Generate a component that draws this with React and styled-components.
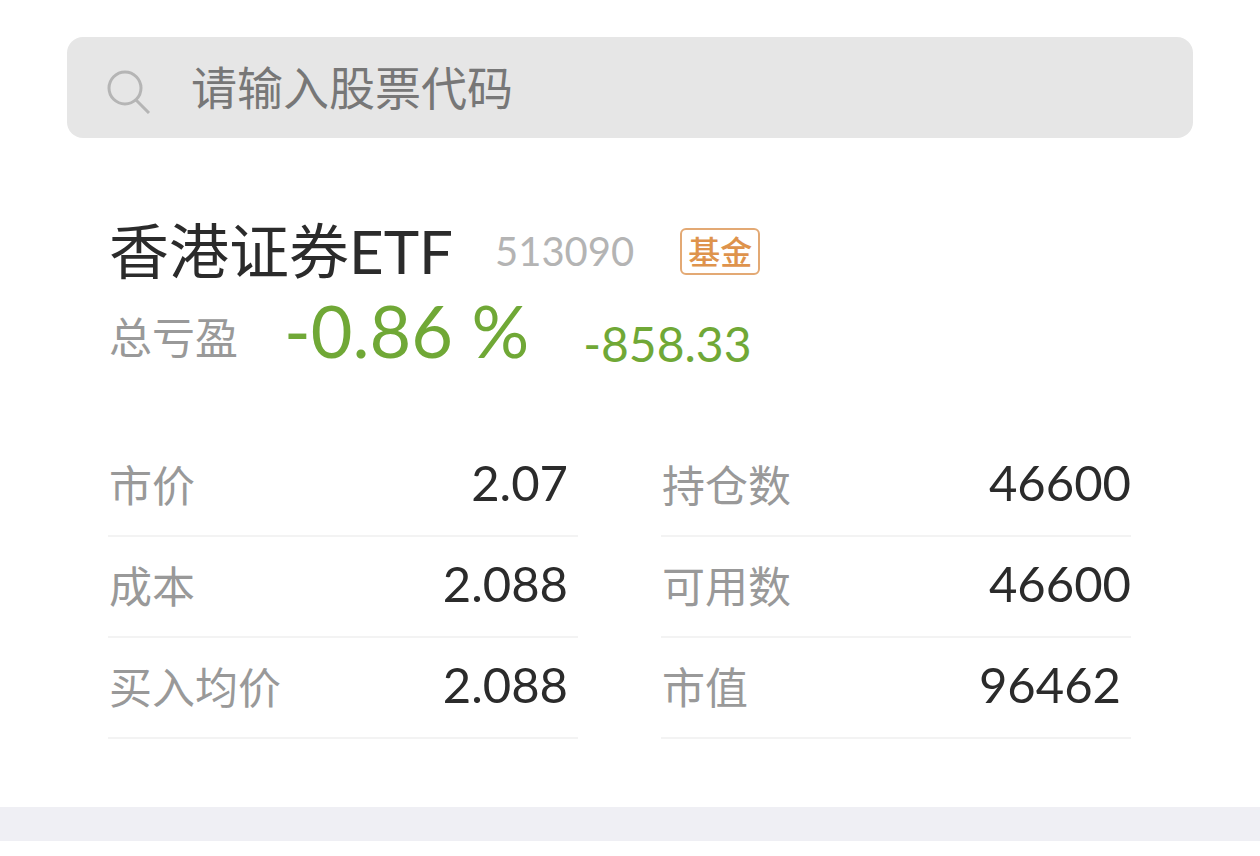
import { useState } from "react";
import styled, { createGlobalStyle } from "styled-components";

const GlobalStyle = createGlobalStyle`
  * {
    box-sizing: border-box;
  }
  body {
    margin: 0;
    background: #fff;
    color: #2b2b2b;
    font-family: Lato, "Noto Sans CJK SC", sans-serif;
  }
`;

const Page = styled.main`
  padding-top: 37px;
`;

const SearchBar = styled.label`
  display: flex;
  align-items: center;
  gap: 40px;
  height: 101px;
  margin: 0 67px;
  padding: 0 40px;
  border-radius: 16px;
  background: #e6e6e6;
`;

const SearchIcon = styled.svg`
  flex: none;
  width: 44px;
  height: 44px;
  margin-top: 8px;
  fill: none;
  stroke: #b5b5b5;
  stroke-width: 3;
`;

const SearchInput = styled.input`
  flex: 1;
  min-width: 0;
  padding: 0;
  border: 0;
  outline: 0;
  background: transparent;
  color: #2b2b2b;
  font-family: inherit;
  font-size: 46px;
  line-height: 64px;

  &::placeholder {
    color: #777;
    opacity: 1;
  }
`;

const Holding = styled.section`
  padding: 76px 129px 68px 108px;
`;

const TitleRow = styled.header`
  display: flex;
  align-items: center;
  height: 74px;
  padding-left: 1px;
`;

const Name = styled.h1`
  margin: 0;
  font-size: 60px;
  font-weight: 400;
  line-height: 72px;
`;

const Code = styled.span`
  margin-left: 42px;
  color: #b4b4b4;
  font-size: 40px;
  line-height: 48px;
`;

const Tag = styled.span`
  margin-left: 46px;
  padding: 0 6px;
  border: 2px solid #e3a974;
  border-radius: 6px;
  color: #de934c;
  font-size: 32px;
  font-weight: 500;
  line-height: 43px;
`;

const ProfitRow = styled.div`
  display: flex;
  align-items: flex-end;
  height: 84px;
  padding-left: 1px;
`;

const Label = styled.span`
  color: #999;
  font-size: 43px;
  line-height: 68px;
`;

const Profit = styled.strong`
  margin-left: ${(props) => (props.$large ? "46px" : "54px")};
  color: #70a836;
  font-size: ${(props) => (props.$large ? "72px" : "48px")};
  font-weight: 400;
  line-height: ${(props) => (props.$large ? "84px" : "56px")};
`;

const Stats = styled.dl`
  display: grid;
  grid-template-columns: 1fr 1fr;
  column-gap: 83px;
  margin: 64px 0 0;
`;

const Stat = styled.div`
  display: flex;
  align-items: center;
  justify-content: space-between;
  height: 101px;
  padding: 0 ${(props) => props.$inset || "0"} 0 1px;
  border-bottom: 2px solid #f3f3f3;
`;

const StatName = styled(Label).attrs({ as: "dt" })``;

const StatValue = styled.dd`
  margin: 0;
  padding-bottom: 8px;
  font-size: 49px;
  line-height: 60px;
`;

const Divider = styled.div`
  height: 34px;
  background: #efeff4;
`;

const stats = [
  { name: "市价", value: "2.07", inset: "10px" },
  { name: "持仓数", value: "46600" },
  { name: "成本", value: "2.088", inset: "10px" },
  { name: "可用数", value: "46600" },
  { name: "买入均价", value: "2.088", inset: "10px" },
  { name: "市值", value: "96462", inset: "10px" },
];

function Search() {
  const [keyword, setKeyword] = useState("");

  return (
    <SearchBar>
      <SearchIcon viewBox="0 0 44 44" aria-hidden="true">
        <circle cx="18" cy="18" r="16" />
        <path d="M29 30L42 43" />
      </SearchIcon>
      <SearchInput
        type="text"
        aria-label="请输入股票代码"
        placeholder="请输入股票代码"
        value={keyword}
        onChange={(e) => setKeyword(e.target.value)}
      />
    </SearchBar>
  );
}

function App() {
  return (
    <>
      <GlobalStyle />
      <Page>
        <Search />
        <Holding>
          <TitleRow>
            <Name>香港证券ETF</Name>
            <Code>513090</Code>
            <Tag>基金</Tag>
          </TitleRow>
          <ProfitRow>
            <Label>总亏盈</Label>
            <Profit $large>-0.86 %</Profit>
            <Profit>-858.33</Profit>
          </ProfitRow>
          <Stats>
            {stats.map((item) => (
              <Stat key={item.name} $inset={item.inset}>
                <StatName>{item.name}</StatName>
                <StatValue>{item.value}</StatValue>
              </Stat>
            ))}
          </Stats>
        </Holding>
        <Divider />
      </Page>
    </>
  );
}

export default App;
